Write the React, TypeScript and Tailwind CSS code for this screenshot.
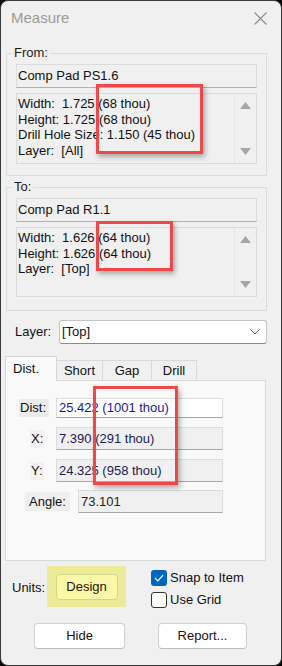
import React from 'react';

const Arrow = ({ up }: { up?: boolean }) => (
  <svg width="11" height="7" viewBox="0 0 11 7" className="text-[#a6a6a6]">
    <path d={up ? 'M5.5 0 L11 7 L0 7 Z' : 'M0 0 L11 0 L5.5 7 Z'} fill="currentColor" />
  </svg>
);

function InfoBox({ lines, height }: { lines: string[]; height: string }) {
  return (
    <div className={`mt-[5px] flex ${height} border border-[#dadada] bg-[#f0f0f0]`}>
      <div className="flex-1 whitespace-pre pl-[1px] pt-[2px] leading-[15.6px]">
        {lines.map((l) => (
          <div key={l}>{l}</div>
        ))}
      </div>
      <div className="flex w-[22px] flex-col items-center justify-between border-l border-[#e4e4e4] py-[8px]">
        <Arrow up />
        <Arrow />
      </div>
    </div>
  );
}

function Group({ label, name, lines, boxH, pb, mt }: { label: string; name: string; lines: string[]; boxH: string; pb: string; mt: string }) {
  return (
    <fieldset className={`ml-[5px] ${mt} w-[261px] border border-[#dcdcdc] px-[9px] ${pb}`}>
      <legend className="-ml-[4px] px-[2px] text-[13px] leading-[16px] text-[#1a1a1a]">{label}</legend>
      <div className="mt-[3px] flex h-[24px] items-center border border-[#dcdcdc] border-b-[#b0b0b0] bg-[#f0f0f0] pl-[1px]">{name}</div>
      <InfoBox lines={lines} height={boxH} />
    </fieldset>
  );
}

function Field({ w, value, white, color }: { w: string; value: string; white?: boolean; color: string }) {
  return (
    <div
      className={`flex items-center ${w} h-full border border-[#dcdcdc] border-b-[#a8a8a8] pl-[2px] ${white ? 'bg-white' : 'bg-[#f0f0f0]'} ${color}`}
    >
      {value}
    </div>
  );
}

export default function App() {
  return (
    <div className="h-[666px] w-[282px] bg-black font-['Liberation_Sans',Arial,sans-serif] text-[13px] text-[#111]">
      <div className="relative flex h-full w-full flex-col overflow-hidden rounded-[8px] border border-[#3a3a3a] bg-[#f0f0f0]">
        {/* title bar */}
        <div className="flex h-[34px] shrink-0 items-center justify-between pl-[10px] pr-[14px]">
          <span className="text-[15px] text-[#9b9b9b]">Measure</span>
          <svg width="13" height="13" viewBox="0 0 13 13">
            <path d="M0.5 0.5 L12.5 12.5 M12.5 0.5 L0.5 12.5" stroke="#8a8a8a" strokeWidth="1.1" />
          </svg>
        </div>

        <Group
          label="From:"
          name="Comp Pad PS1.6"
          lines={['Width:  1.725 (68 thou)', 'Height: 1.725 (68 thou)', 'Drill Hole Size: 1.150 (45 thou)', 'Layer:  [All]']}
          boxH="h-[71px]"
          pb="pb-[11px]"
          mt="mt-[10px]"
        />
        <Group
          label="To:"
          name="Comp Pad R1.1"
          lines={['Width:  1.626 (64 thou)', 'Height: 1.626 (64 thou)', 'Layer:  [Top]']}
          boxH="h-[70px]"
          pb="pb-[13px]"
          mt="mt-[3px]"
        />

        {/* layer */}
        <div className="mt-[9px] flex h-[24px] items-center pl-[14px]">
          <span className="w-[44px]">Layer:</span>
          <div className="flex h-full w-[208px] items-center justify-between rounded-[3px] border border-[#c4c4c4] border-b-[#8a8a8a] bg-white pl-[2px] pr-[6px]">
            <span>[Top]</span>
            <svg width="10" height="6" viewBox="0 0 10 6">
              <path d="M0.5 0.5 L5 5 L9.5 0.5" stroke="#606060" fill="none" strokeWidth="1" />
            </svg>
          </div>
        </div>

        {/* tabs */}
        <div className="relative z-10 ml-[4px] mt-[12px] flex h-[25px] items-end">
          <div className="flex h-[25px] w-[52px] items-center border border-b-0 border-[#d6d6d6] bg-[#f9f9f9] pl-[7px]">Dist.</div>
          <div className="flex h-[21px] w-[46px] items-center justify-center border border-l-0 border-b-0 border-[#d9d9d9]">Short</div>
          <div className="flex h-[21px] w-[49px] items-center justify-center border border-l-0 border-b-0 border-[#d9d9d9]">Gap</div>
          <div className="flex h-[21px] w-[45px] items-center justify-center border border-l-0 border-b-0 border-[#d9d9d9]">Drill</div>
        </div>
        <div className="-mt-[1px] ml-[4px] h-[181px] w-[261px] border border-[#d9d9d9] bg-[#f9f9f9] pt-[17px]">
          <div className="flex h-[20px] items-center">
            <div className="flex w-[50px]">
              <span className="ml-[13px] flex h-[18px] w-[30px] items-center bg-[#ececec] pl-[1px]">Dist:</span>
            </div>
            <Field w="w-[167px]" value="25.422 (1001 thou)" white color="text-[#1a1aa0]" />
          </div>
          <div className="mt-[9px] flex h-[23px] items-center">
            <div className="flex w-[50px]">
              <span className="ml-[24px] flex h-[18px] items-center bg-[#f2f2f2] px-[1px]">X:</span>
            </div>
            <Field w="w-[167px]" value="7.390 (291 thou)" color="text-[#1c1c50]" />
          </div>
          <div className="mt-[9px] flex h-[23px] items-center">
            <div className="flex w-[50px]">
              <span className="ml-[24px] flex h-[18px] items-center bg-[#f2f2f2] px-[1px]">Y:</span>
            </div>
            <Field w="w-[167px]" value="24.325 (958 thou)" color="text-[#1c1c50]" />
          </div>
          <div className="mt-[8px] flex h-[23px] items-center">
            <div className="flex w-[72px]">
              <span className="ml-[19px] flex h-[19px] items-center bg-[#efefef] px-[4px]">Angle:</span>
            </div>
            <Field w="w-[145px]" value="73.101" color="text-[#222]" />
          </div>
        </div>

        {/* units + checks */}
        <div className="mt-[5px] flex items-start pl-[11px]">
          <span className="mt-[12px] w-[35px]">Units:</span>
          <div className="flex h-[41px] w-[79px] items-center justify-center bg-[#ebeb98]">
            <div className="flex h-[26px] w-[62px] items-center justify-center rounded-[4px] border border-[#d4d48e] bg-[#f8f8a6] text-[#2a1414]">
              Design
            </div>
          </div>
          <div className="ml-[25px] mt-[4px] flex flex-col gap-[6px] leading-[16px]">
            <div className="flex h-[16px] items-center gap-[3px]">
              <div className="flex h-[16px] w-[16px] items-center justify-center rounded-[3px] bg-[#0067c0]">
                <svg width="10" height="8" viewBox="0 0 10 8">
                  <path d="M1 4 L3.8 6.8 L9 1.2" stroke="white" strokeWidth="1.2" fill="none" />
                </svg>
              </div>
              <span>Snap to Item</span>
            </div>
            <div className="flex h-[16px] items-center gap-[3px]">
              <div className="h-[16px] w-[16px] rounded-[3px] border border-[#333] bg-white" />
              <span>Use Grid</span>
            </div>
          </div>
        </div>

        {/* buttons */}
        <div className="mt-[15px] flex gap-[33px] pl-[33px]">
          <div className="flex h-[26px] w-[91px] items-center justify-center rounded-[4px] border border-[#d0d0d0] border-b-[#bdbdbd] bg-white text-[#1a1010]">Hide</div>
          <div className="flex h-[26px] w-[89px] items-center justify-center rounded-[4px] border border-[#d0d0d0] border-b-[#bdbdbd] bg-white text-[#1a1010]">Report...</div>
        </div>

        {/* red annotation boxes */}
        <div className="absolute left-[95px] top-[83px] h-[70px] w-[107px] border-[3px] border-[#f04848] shadow-[2px_3px_5px_rgba(0,0,0,0.3)]" />
        <div className="absolute left-[95px] top-[220px] h-[50px] w-[77px] border-[3px] border-[#f04848] shadow-[2px_3px_5px_rgba(0,0,0,0.3)]" />
        <div className="absolute left-[92px] top-[385px] h-[99px] w-[85px] border-[3px] border-[#f04848] shadow-[2px_3px_5px_rgba(0,0,0,0.3)]" />
      </div>
    </div>
  );
}
